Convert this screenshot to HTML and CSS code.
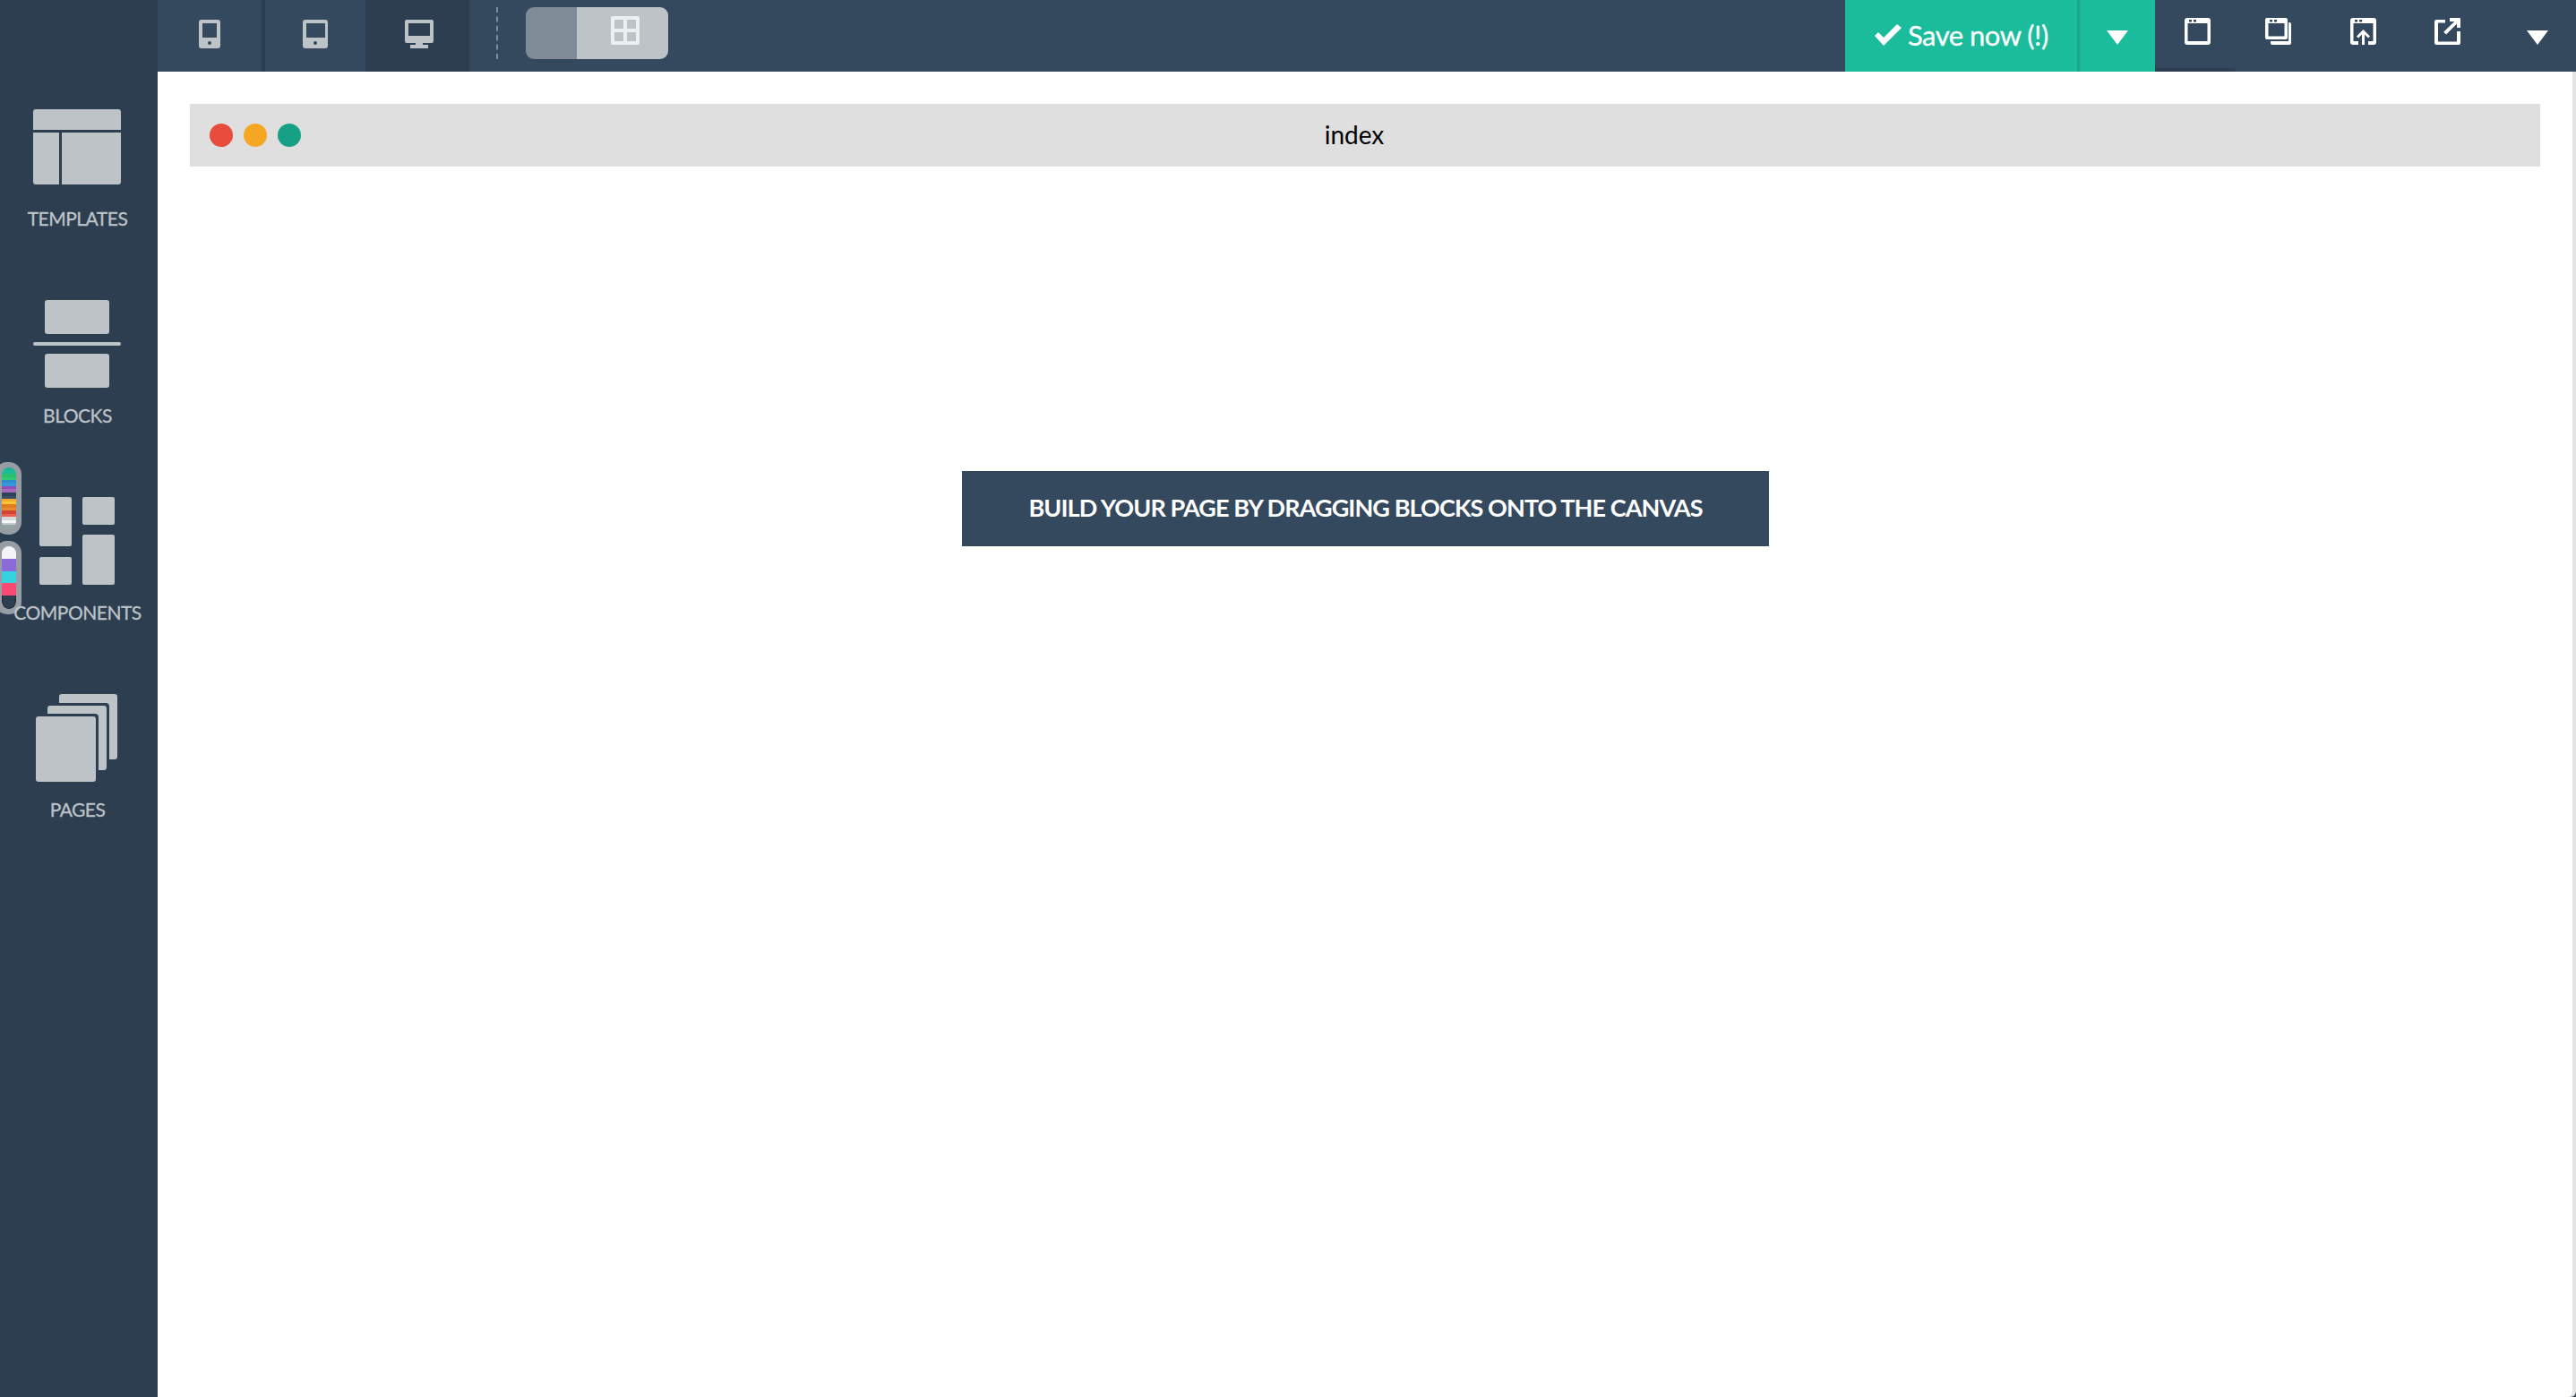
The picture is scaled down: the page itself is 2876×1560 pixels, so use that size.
FILE: index.html
```html
<!DOCTYPE html>
<html lang="en">
<head>
<meta charset="utf-8">
<title>index</title>
<link rel="stylesheet" href="styles.css">
</head>
<body>
<aside class="sidebar">
  <div class="pill pill-a">
    <div class="pill-in">
      <i class="s1"></i><i class="s2"></i><i class="s3"></i><i class="s4"></i><i class="s5"></i><i class="s6"></i><i class="s7"></i><i class="s8"></i><i class="s9"></i><i class="s10"></i>
    </div>
  </div>
  <div class="pill pill-b">
    <div class="pill-in">
      <i class="t1"></i><i class="t2"></i><i class="t3"></i><i class="t4"></i><i class="t5"></i>
    </div>
  </div>
  <div class="cat">
    <svg class="cat-icon" viewBox="0 0 176 130"><g class="ic"><path d="M37 25a3 3 0 0 1 3-3h92a3 3 0 0 1 3 3v20H37z"/><path d="M37 48h29v58H40a3 3 0 0 1-3-3z"/><path d="M69 48h66v55a3 3 0 0 1-3 3H69z"/></g></svg>
    <span class="cat-label">TEMPLATES</span>
  </div>
  <div class="cat">
    <svg class="cat-icon" viewBox="0 0 176 130"><g class="ic"><rect x="50" y="15" width="72" height="38" rx="3"/><rect x="37" y="62" width="98" height="4" rx="2"/><rect x="50" y="75" width="72" height="38" rx="3"/></g></svg>
    <span class="cat-label">BLOCKS</span>
  </div>
  <div class="cat">
    <svg class="cat-icon" viewBox="0 0 176 130"><g class="ic"><rect x="44" y="15" width="36" height="55" rx="2"/><rect x="92" y="15" width="36" height="31" rx="2"/><rect x="44" y="82" width="36" height="31" rx="2"/><rect x="92" y="57" width="36" height="56" rx="2"/></g></svg>
    <span class="cat-label">COMPONENTS</span>
  </div>
  <div class="cat">
    <svg class="cat-icon" viewBox="0 0 176 130"><g class="ic"><rect x="66" y="15" width="65" height="73" rx="3"/></g><rect class="gap" x="50" y="25" width="72" height="78" rx="4"/><g class="ic"><rect x="53" y="28" width="66" height="72" rx="3"/></g><rect class="gap" x="37" y="37" width="73" height="79" rx="4"/><g class="ic"><rect x="40" y="40" width="67" height="73" rx="3"/></g></svg>
    <span class="cat-label">PAGES</span>
  </div>
</aside>
<div class="main">
  <header class="topbar">
    <div class="mode mode-first">
      <svg width="24" height="32" viewBox="0 0 24 32"><path class="ic" fill-rule="evenodd" d="M3 0h18a3 3 0 0 1 3 3v26a3 3 0 0 1-3 3H3a3 3 0 0 1-3-3V3a3 3 0 0 1 3-3zM4 4v16h16V4zM12 24a2 2 0 1 0 0 4 2 2 0 0 0 0-4z"/></svg>
    </div>
    <div class="mode mode-second">
      <svg width="28" height="32" viewBox="0 0 28 32"><path class="ic" fill-rule="evenodd" d="M3 0h22a3 3 0 0 1 3 3v26a3 3 0 0 1-3 3H3a3 3 0 0 1-3-3V3a3 3 0 0 1 3-3zM4 4v16h21V4zM14 24a2 2 0 1 0 0 4 2 2 0 0 0 0-4z"/></svg>
    </div>
    <div class="mode mode-active">
      <svg width="32" height="32" viewBox="0 0 32 32"><path class="ic" fill-rule="evenodd" d="M2 0h28a2 2 0 0 1 2 2v22a2 2 0 0 1-2 2H20v2h6v4H6v-4h6v-2H2a2 2 0 0 1-2-2V2a2 2 0 0 1 2-2zM4 4v14h24V4z"/></svg>
    </div>
    <div class="dash"></div>
    <div class="toggle">
      <div class="toggle-off"></div>
      <div class="toggle-on">
        <svg width="32" height="32" viewBox="0 0 32 32"><path class="grid-ic" fill-rule="evenodd" d="M2 0h28a2 2 0 0 1 2 2v28a2 2 0 0 1-2 2H2a2 2 0 0 1-2-2V2a2 2 0 0 1 2-2zM4 4v10h10V4zM18 4v10h10V4zM4 18v10h10V18zM18 18v10h10V18z"/></svg>
      </div>
    </div>
    <div class="save">
      <div class="save-main">
        <svg width="30" height="24" viewBox="0 0 30 24"><path class="white" d="M0 13l4-4 6 6L25 0l5 4-20 20z"/></svg>
        <span class="save-text">Save now (!)</span>
      </div>
      <div class="save-more"><span class="tri"></span></div>
    </div>
    <div class="tools">
      <div class="tool-window">
        <svg width="29" height="30" viewBox="0 0 29 30"><path class="white" fill-rule="evenodd" d="M3 0h23a3 3 0 0 1 3 3v24a3 3 0 0 1-3 3H3a3 3 0 0 1-3-3V3a3 3 0 0 1 3-3zM3.500 6v20h22V6zM5 2v2.500h3V2zM10 2v2.500h3V2z"/></svg>
      </div>
      <div class="tool-copy">
        <svg width="29" height="30" viewBox="0 0 29 30"><path class="white" fill-rule="evenodd" d="M2 0h21a2 2 0 0 1 2 2v20a2 2 0 0 1-2 2H2a2 2 0 0 1-2-2V2a2 2 0 0 1 2-2zM3.500 6v14.500h18V6zM5 2v2.500h3V2zM10 2v2.500h3V2z"/><path class="white" d="M26 5h1a2 2 0 0 1 2 2v21a2 2 0 0 1-2 2H8a2 2 0 0 1-2-2v-2h20z"/></svg>
      </div>
      <div class="tool-upload">
        <svg width="29" height="30" viewBox="0 0 29 30"><path class="white" fill-rule="evenodd" d="M3 0h23a3 3 0 0 1 3 3v24a3 3 0 0 1-3 3h-6v-4h5.500V6h-22v20H9v4H3a3 3 0 0 1-3-3V3a3 3 0 0 1 3-3zM5 2v2.500h3V2zM10 2v2.500h3V2z"/><path class="white" d="M14.500 13l7.500 7.500-2 2-4-4V30h-3V18.500l-4 4-2-2z"/></svg>
      </div>
      <div class="tool-ext">
        <svg width="30" height="30" viewBox="0 0 30 30"><path class="white" d="M2 2h10v3.500H4v21h21V15h4v13a2 2 0 0 1-2 2H2a2 2 0 0 1-2-2V4a2 2 0 0 1 2-2zM17 0h11a1 1 0 0 1 1 1v10h-4V6.500L13 18.500l-2.800-2.800L22.200 4H17z"/></svg>
      </div>
      <div class="tool-more"><span class="tri"></span></div>
    </div>
  </header>
  <main class="stage">
    <div class="frame-head">
      <div class="lights"><i class="red"></i><i class="amber"></i><i class="green"></i></div>
      <div class="frame-title">index</div>
    </div>
    <div class="hint">BUILD YOUR PAGE BY DRAGGING BLOCKS ONTO THE CANVAS</div>
  </main>
</div>
</body>
</html>
```
FILE: styles.css
```css
* { box-sizing: border-box; }
html, body { height: 100%; }
body {
  margin: 0;
  display: flex;
  height: 1560px;
  overflow: hidden;
  background: #2c3e50;
  font-family: Lato, "Open Sans", sans-serif;
}
svg { display: block; }
.ic { fill: #bdc3c7; }
.white { fill: #fff; }
.grid-ic { fill: #ecf0f1; }
.gap { fill: #2c3e50; }

.sidebar {
  position: relative;
  width: 176px;
  flex: none;
  padding-top: 100px;
  background: #2c3e50;
}
.cat {
  height: 220px;
  display: flex;
  flex-direction: column;
  align-items: center;
}
.cat-icon { width: 176px; height: 130px; flex: none; }
.cat-label {
  position: relative;
  margin: 1px 3px 0 0;
  font-size: 21px;
  line-height: 26px;
  color: #bdc3c7;
  letter-spacing: -0.5px;
  -webkit-text-stroke: 0.3px #bdc3c7;
}

.pill {
  position: absolute;
  left: -6px;
  width: 30px;
  height: 81px;
  padding: 6px 6px 6px 8px;
  border-radius: 14px;
  background: #979ea3;
}
.pill-a { top: 516px; }
.pill-b { top: 604px; height: 82px; }
.pill-in {
  height: 100%;
  display: flex;
  flex-direction: column;
  overflow: hidden;
  border-radius: 8px;
}
.pill-in i { flex: 1; display: block; }
.s1 { background: linear-gradient(#1ab394 50%, #1abc9c 50%); }
.s2 { background: linear-gradient(#2bbd68 50%, #2ecc71 50%); }
.s3 { background: linear-gradient(#2f8cc9 50%, #3498db 50%); }
.s4 { background: linear-gradient(#9650b3 50%, #a569bd 50%); }
.s5 { background: linear-gradient(#2f4356 50%, #3a5068 50%); }
.s6 { background: linear-gradient(#f8a82c 50%, #f9c63a 50%); }
.s7 { background: linear-gradient(#e07b1f 50%, #e88a2e 50%); }
.s8 { background: linear-gradient(#cf4436 50%, #ec5f4e 50%); }
.s9 { background: linear-gradient(#d5dadd 50%, #f4f6f7 50%); }
.s10 { background: linear-gradient(#c3c9cc 30%, #95a5a6 30%); }
.t1 { background: #f4f4f6; }
.t2 { background: #8b6bd8; }
.t3 { background: #35d3e0; }
.t4 { background: #f84a72; }
.t5 { background: #2c3e50; border: 1px solid #1c2733; border-top: 0; border-radius: 0 0 8px 8px; }

.main {
  flex: 1;
  min-width: 0;
  display: flex;
  flex-direction: column;
}
.topbar {
  height: 80px;
  flex: none;
  display: flex;
  align-items: stretch;
  background: #34495e;
}
.mode {
  display: flex;
  align-items: center;
  justify-content: center;
  padding-bottom: 4px;
}
.mode-first { width: 120px; border-right: 4px solid #2c3e50; }
.mode-second { width: 112px; }
.mode-active { width: 116px; padding-left: 4px; background: #2c3e50; }
.dash {
  width: 0;
  height: 58px;
  margin: 8px 0 0 30px;
  border-left: 2px dashed #7f8c98;
}
.toggle {
  width: 159px;
  height: 58px;
  margin: 8px 0 0 31px;
  display: flex;
  overflow: hidden;
  border-radius: 9px;
}
.toggle-off { width: 57px; background: #7f8c98; }
.toggle-on {
  flex: 1;
  display: flex;
  justify-content: center;
  padding: 10px 0 0 6px;
  background: #bdc3c7;
}

.save {
  display: flex;
  margin-left: auto;
  background: #1abc9c;
  color: #fff;
}
.save-main {
  width: 262px;
  display: flex;
  align-items: center;
  gap: 7px;
  padding: 0 0 3px 33px;
  border-right: 3px solid #1aa88d;
  font-size: 31px;
  letter-spacing: -0.5px;
}
.save-text { -webkit-text-stroke: 0.3px #fff; }
.save-more {
  width: 84px;
  display: flex;
  align-items: center;
  justify-content: center;
}
.tri {
  display: block;
  width: 0;
  height: 0;
  margin-top: 4px;
  border-left: 12px solid transparent;
  border-right: 12px solid transparent;
  border-top: 16px solid #fff;
}
.tools {
  position: relative;
  display: flex;
  width: 470px;
  padding: 20px 0 0 33px;
}
.tools::after {
  content: "";
  position: absolute;
  left: 0;
  bottom: 0;
  width: 90px;
  height: 4px;
  border-bottom-right-radius: 4px;
  background: #2c3e50;
}
.tool-copy { margin-left: 61px; }
.tool-upload { margin-left: 66px; }
.tool-ext { margin-left: 65px; }
.tool-more { margin: 10px 0 0 73px; }

.stage {
  flex: 1;
  width: 2696px;
  padding: 36px 36px 0;
  background: #fff;
  border-bottom-right-radius: 6px;
  box-shadow: 4px 0 0 #e6e4e4;
}
.frame-head {
  position: relative;
  height: 70px;
  display: flex;
  align-items: center;
  justify-content: center;
  padding: 0 24px 2px 0;
  background: #dfdfdf;
}
.lights {
  position: absolute;
  left: 22px;
  top: 22px;
  display: flex;
  gap: 12px;
}
.lights i { width: 26px; height: 26px; border-radius: 50%; display: block; }
.red { background: #e74c3c; }
.amber { background: #f5a623; }
.green { background: #16a085; }
.frame-title { font-size: 28px; color: #000; }
.hint {
  width: 901px;
  height: 84px;
  margin: 340px 0 0 calc(50% - 450px);
  display: flex;
  align-items: center;
  justify-content: center;
  padding-bottom: 3px;
  background: #34495e;
  color: #fff;
  font-size: 27px;
  font-weight: 700;
  letter-spacing: -0.9px;
  white-space: nowrap;
}
```
